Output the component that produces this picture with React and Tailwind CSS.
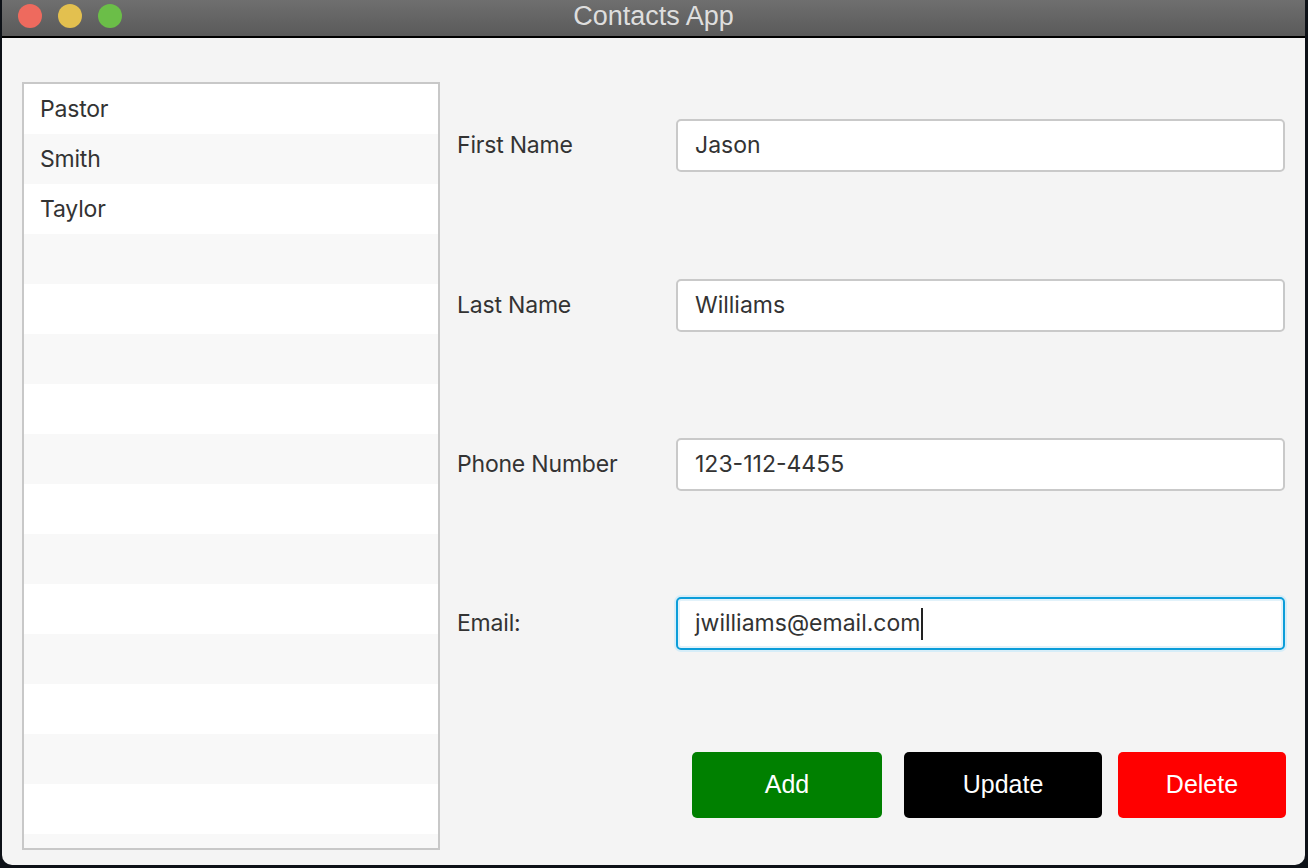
import React from 'react';

const contacts = ['Pastor', 'Smith', 'Taylor'];
const rows = Array.from({ length: 16 }, (_, i) => contacts[i] || '');

const fields = [
  { label: 'First Name', value: 'Jason' },
  { label: 'Last Name', value: 'Williams' },
  { label: 'Phone Number', value: '123-112-4455' },
  { label: 'Email:', value: 'jwilliams@email.com', focused: true },
];

const sans = { fontFamily: 'Inter, "Noto Sans", sans-serif' };
const helv = { fontFamily: '"Liberation Sans", Arial, sans-serif' };

const Field = ({ label, value, focused }) => (
  <div className="flex items-center h-[53px]">
    <div className="w-[219px] text-[23px] text-[#333333] tracking-[-0.2px]">{label}</div>
    {focused ? (
      <div className="w-[609px] h-[53px] rounded-[5px] bg-white border-2 border-[#0b9dd9] shadow-[0_0_0_2px_#d6edf8,inset_0_0_0_2px_#e2f2fa] flex items-center pl-[17px] text-[23px] text-[#333333]">
        <span>{value}</span>
        <span className="w-[2px] h-[32px] bg-[#222222] ml-[1px]" />
      </div>
    ) : (
      <div className="w-[609px] h-[53px] rounded-[5px] bg-white border-2 border-[#c9c9c9] flex items-center pl-[17px] text-[23px] text-[#333333]">
        {value}
      </div>
    )}
  </div>
);

export default function App() {
  return (
    <div className="w-[1308px] h-[868px] bg-[#0d1117] overflow-hidden" style={sans}>
      <div className="ml-[2px] w-[1303px] h-[865px] rounded-b-[10px] overflow-hidden bg-[#f4f4f4] flex flex-col">
        {/* title bar */}
        <div className="relative h-[38px] shrink-0 bg-gradient-to-b from-[#6f6f6f] to-[#5a5a5a] border-b-2 border-black flex items-center justify-center">
          <div className="absolute left-[16px] top-[4px] flex gap-[16px]">
            <div className="w-[24px] h-[24px] rounded-full bg-[#ee6a5e]" />
            <div className="w-[24px] h-[24px] rounded-full bg-[#e3c04f]" />
            <div className="w-[24px] h-[24px] rounded-full bg-[#6bbe48]" />
          </div>
          <span className="text-[27px] text-[#dedede] -mt-[4px]" style={helv}>
            Contacts App
          </span>
        </div>

        <div className="flex flex-1">
          {/* list */}
          <div className="ml-[20px] mt-[44px] w-[418px] h-[768px] border-2 border-[#c8c8c8] bg-white overflow-hidden">
            {rows.map((name, i) => (
              <div
                key={i}
                className={`h-[50px] shrink-0 flex items-center pl-[16px] text-[23px] text-[#333333] tracking-[-0.2px] ${i % 2 ? 'bg-[#f8f8f8]' : 'bg-white'}`}
              >
                {name}
              </div>
            ))}
          </div>

          {/* form */}
          <div className="ml-[17px] pt-[81px] flex flex-col">
            <Field {...fields[0]} />
            <div className="h-[107px]" />
            <Field {...fields[1]} />
            <div className="h-[106px]" />
            <Field {...fields[2]} />
            <div className="h-[106px]" />
            <Field {...fields[3]} />
            <div className="mt-[102px] ml-[235px] flex text-[25px] text-white" style={helv}>
              <button className="w-[190px] h-[66px] rounded-[5px] bg-[#008000]">Add</button>
              <button className="ml-[22px] w-[198px] h-[66px] rounded-[5px] bg-black">Update</button>
              <button className="ml-[16px] w-[168px] h-[66px] rounded-[5px] bg-[#ff0000]">Delete</button>
            </div>
          </div>
        </div>
      </div>
    </div>
  );
}
